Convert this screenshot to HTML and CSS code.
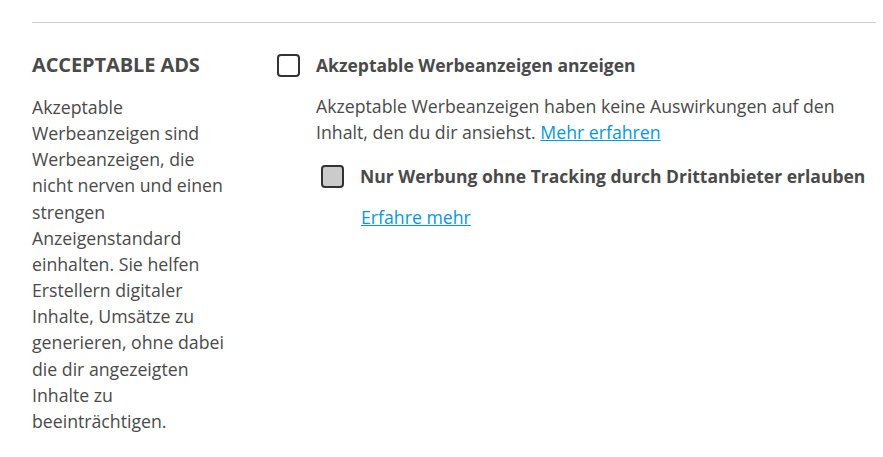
FILE: index.html
```html
<!DOCTYPE html>
<html lang="de">
<head>
<meta charset="utf-8">
<link rel="stylesheet" href="styles.css">
</head>
<body>
<div class="page">
  <hr class="rule">
  <section class="section">
    <div class="side">
      <h2 class="heading">ACCEPTABLE ADS</h2>
      <p class="side-text">Akzeptable Werbeanzeigen sind Werbeanzeigen, die nicht nerven und einen strengen Anzeigenstandard einhalten. Sie helfen Erstellern digitaler Inhalte, Umsätze zu generieren, ohne dabei die dir angezeigten Inhalte zu beeinträchtigen.</p>
    </div>
    <div class="main">
      <label class="option">
        <span class="box"></span>
        <span class="option-label">Akzeptable Werbeanzeigen anzeigen</span>
      </label>
      <p class="desc">Akzeptable Werbeanzeigen haben keine Auswirkungen auf den Inhalt, den du dir ansiehst. <a class="link" href="#">Mehr erfahren</a></p>
      <label class="option sub">
        <span class="box box-gray"></span>
        <span class="option-label">Nur Werbung ohne Tracking durch Drittanbieter erlauben</span>
      </label>
      <p class="sub-link"><a class="link" href="#">Erfahre mehr</a></p>
    </div>
  </section>
</div>
</body>
</html>
```
FILE: styles.css
```css
html, body {
  margin: 0;
  background: #fff;
}
body {
  font-family: "Open Sans", "Noto Sans", sans-serif;
  font-size: 17.7px;
  line-height: 26px;
  color: #4a4a4a;
}
.page {
  padding: 22px 7px 0 32px;
}
.rule {
  margin: 0;
  border: 0;
  border-top: 1px solid #d0d0d0;
}
.section {
  display: grid;
  grid-template-columns: 245px 1fr;
  padding-top: 29px;
}
.heading {
  margin: 0;
  font-size: 20px;
  line-height: 26px;
  font-weight: 700;
  letter-spacing: -0.1px;
  color: #4a4a4a;
}
.side-text {
  margin: 16px 0 0;
  width: 196px;
  line-height: 26.15px;
}
.main {
  display: flex;
  flex-direction: column;
}
.option {
  display: flex;
  align-items: center;
  gap: 16px;
  font-weight: 700;
  font-size: 17.5px;
}
.box {
  box-sizing: border-box;
  width: 23px;
  height: 23px;
  border: 2px solid #333;
  border-radius: 4px;
  background: #fff;
  flex: none;
}
.box-gray {
  background: #cbcbcb;
}
.desc {
  margin: 15px 0 0 39px;
}
.sub {
  margin: 18px 0 0 44px;
}
.sub-link {
  margin: 15px 0 0 84px;
}
.link {
  color: #0797e1;
  text-decoration: underline;
}
```
